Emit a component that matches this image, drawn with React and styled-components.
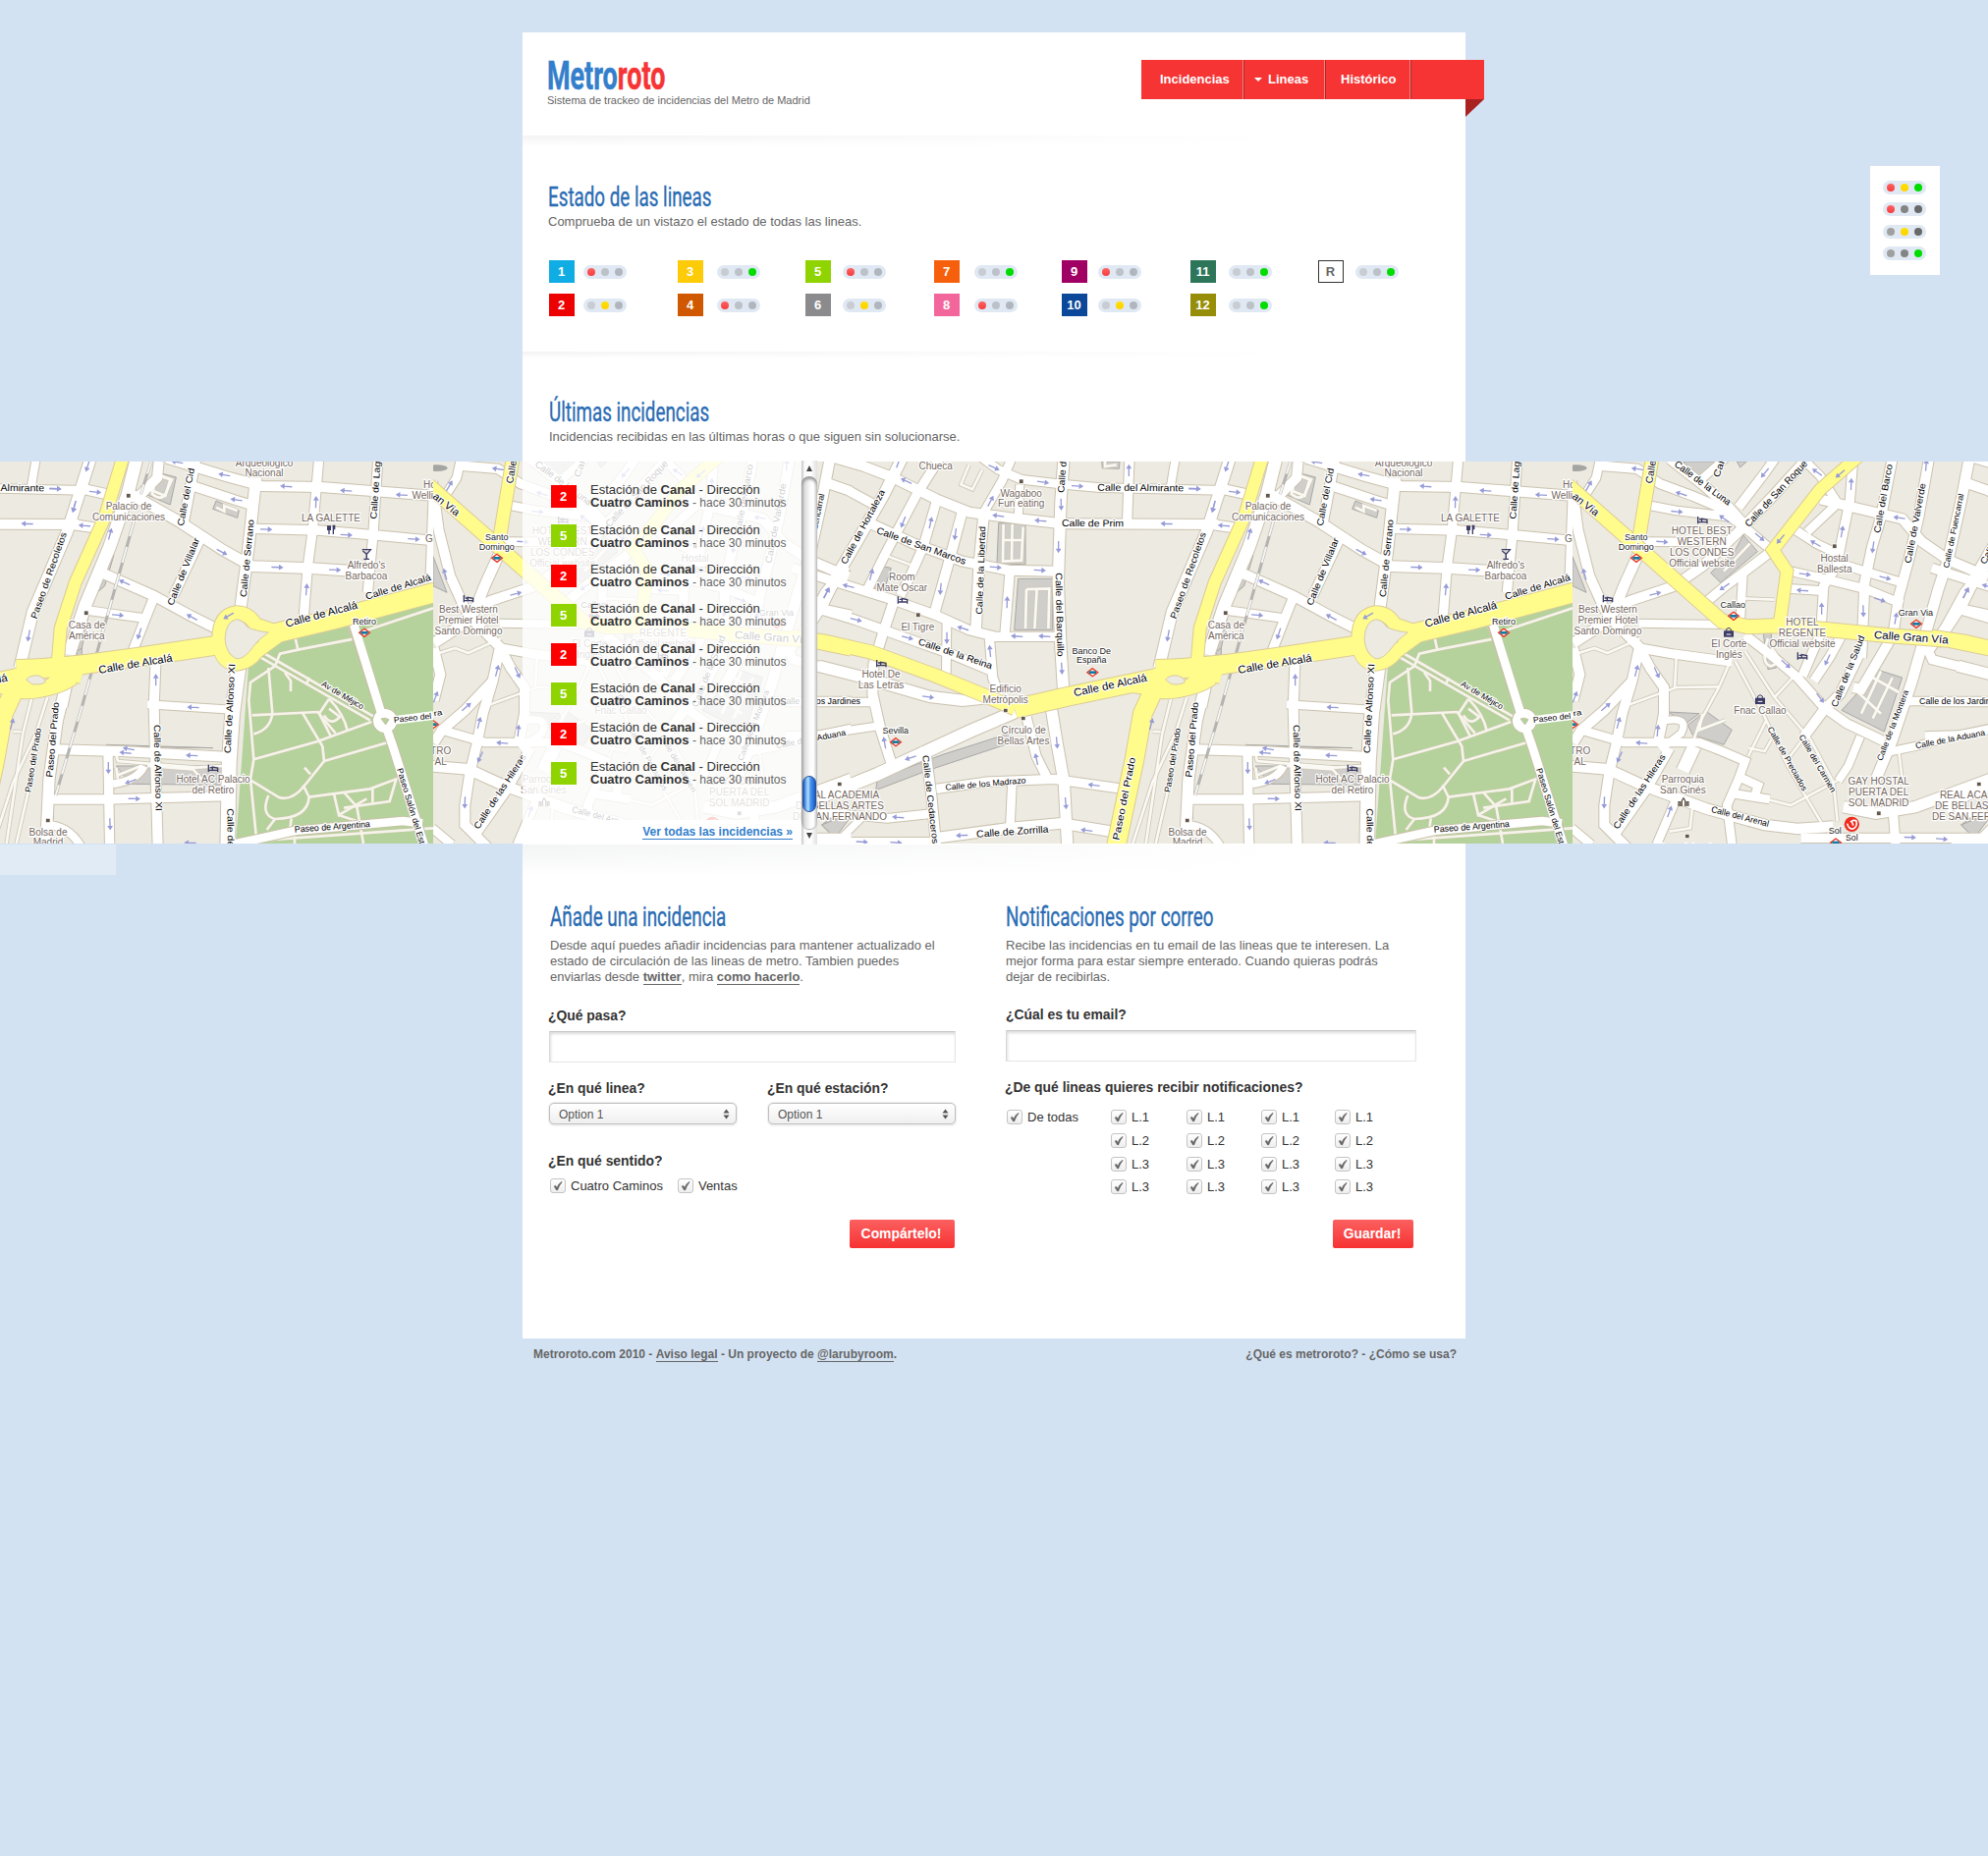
import React from 'react';
import styled, { createGlobalStyle, css } from 'styled-components';

const sans = '"Liberation Sans", Arial, Helvetica, sans-serif';
const display = 'Roboto, "Open Sans", sans-serif';

const GlobalStyle = createGlobalStyle`
  * { box-sizing: border-box; }
  body { margin: 0; background: #d3e2f3; font-family: ${sans}; font-size: 13px; color: #666; }
  h1, h2, p, ul { margin: 0; padding: 0; font-weight: normal; }
  ul { list-style: none; }
`;

/* ---------- street map ---------- */

// Each sheet of the map is drawn in its own coordinates and shifted into the tile.
const sheets = {
  a: {
    dx: -33,
    roads: [
      [30, 'M30 90 L50 240 L85 380 L130 480 L160 520 L235 595 L270 660 L312 720 L312 800 L295 885'],
      [32, 'M240 300 L190 410 L150 510 L35 585'],
      [30, 'M35 600 L55 680 L35 760'],
      [30, 'M130 495 L210 455 L340 412 L430 350 L550 235 L650 130 L750 20'],
      [28, 'M110 42 L230 52 L300 98 L400 135 L470 165 L560 232 L640 300'],
      [30, 'M330 22 L430 100 L510 170 L560 225'],
      [26, 'M70 135 L105 80 L118 20'],
      [26, 'M260 163 L350 180 L440 190 L520 200'],
      [26, 'M250 275 L420 276'],
      [28, 'M540 170 L620 65 L655 15'],
      [24, 'M420 90 L500 20'],
      [26, 'M725 10 L790 75 L838 150'],
      [30, 'M790 145 L870 165 L1040 205 L1100 275 L1180 330 L1302 382'],
      [28, 'M890 20 L880 150 L855 270 L840 350 L800 410 L792 545'],
      [26, 'M840 160 L750 245'],
      [26, 'M715 240 L780 282 L840 310 L860 345'],
      [30, 'M1010 20 L975 200 L948 290 L925 400 L918 575 L915 630'],
      [30, 'M1122 20 L1090 200 L1060 330 L1030 440 L1012 560 L915 725 L890 720'],
      [32, 'M1245 20 L1220 150 L1180 330 L1150 420 L1110 560 L1070 700 L1010 880 L960 1000'],
      [26, 'M700 365 L800 388 L930 420 L1040 465'],
      [26, 'M860 345 L990 385 L1040 400'],
      [26, 'M690 418 L800 425'],
      [28, 'M1295 350 L1230 430 L1170 540 L1120 610 L1132 635 L1302 678'],
      [26, 'M1240 95 L1310 120'],
      [26, 'M1215 478 L1310 498'],
      [24, 'M235 524 L490 528'],
      [28, 'M440 460 L500 410 L560 365 L630 312'],
      [26, 'M553 375 L545 520'],
      [28, 'M240 600 L340 618 L520 642'],
      [28, 'M560 560 L650 630 L720 690 L800 780 L870 830 L985 885'],
      [28, 'M735 685 L795 545'],
      [28, 'M770 700 L820 625 L855 560'],
      [30, 'M918 600 L850 740 L800 790 L740 870'],
      [26, 'M1050 762 L1310 762'],
      [24, 'M985 920 L1080 900 L1200 868 L1310 845'],
      [24, 'M912 870 L875 960 L845 1005'],
      [32, 'M20 960 L140 970 L250 1020 L440 1090 L620 1140 L720 1152 L830 1145'],
      [34, 'M860 1085 L960 1105 L1080 1085 L1310 1000'],
      [28, 'M730 1180 L1310 1180'],
      [28, 'M1012 1100 L1020 1200'],
      [28, 'M330 905 L260 1030 L155 1180'],
      [30, 'M235 605 L215 700 L185 800 L165 900 L145 980 L130 1080 L130 1140 L200 1210'],
      [30, 'M215 700 L130 790 L60 850 L35 890'],
      [26, 'M60 850 L190 888 L300 888 L420 888 L490 915 L560 945 L540 1000 L505 1080 L520 1200'],
      [22, 'M320 820 Q390 810 365 860 L300 910'],
      [40, 'M405 900 L370 975'],
      [26, 'M350 1060 L290 1200'],
      [26, 'M545 995 L600 1020 L590 1050'],
      [26, 'M525 1045 L635 1062'],
      [26, 'M30 1150 L90 1200'],
    ],
    paths: [
      'M530 640 L620 810 L690 960 L800 1145', 'M560 610 L650 750 L760 880 L830 1010 L842 1130',
      'M515 640 L480 720 L420 830 L400 890', 'M200 775 L350 720 L480 718', 'M350 630 L345 722',
      'M35 620 L100 600 L140 615 L240 570', 'M555 448 L650 452', 'M625 820 L570 930', 'M715 680 L650 750',
      'M570 905 L620 915 L640 880', 'M620 1060 L700 1080 L850 1000', 'M1030 920 L1040 1000', 'M750 860 L690 940',
      'M400 1080 L392 1150 L330 1160', 'M60 850 L150 870',
    ],
    gray: ['M555 255 L598 305 L485 400 L455 370 L530 300Z', 'M960 665 L1040 690 L985 855 L855 790 L910 730Z',
      'M385 835 L440 792 L520 850 L495 895 L400 865Z M325 795 L420 800 L380 830Z', 'M33 320 L75 430 L33 410Z', 'M370 30 L470 30 L430 85Z',
      'M615 550 L640 548 L640 600 L655 660 L630 665Z', 'M1220 1140 L1302 1080 L1260 1180Z', 'M535 30 L565 30 L545 48Z'],
    inner: ['M495 365 L575 280', 'M905 735 L975 800', 'M950 690 L1030 735', 'M975 670 L915 800', 'M1010 690 L950 815', 'M630 570 Q605 650 640 655 Q680 640 640 600', 'M430 800 L420 850 L500 820'],
    yellow: [[42, 'M10 95 L220 280 L490 518 L570 535 L650 532 L800 542 L1000 562 L1180 575 L1310 602'], [38, 'M278 10 L235 270'], [36, 'M905 15 L790 115 L645 300 L688 365 L665 530']],
    arrows: [[232, 53, 188], [82, 105, 300], [366, 129, 198], [351, 183, 5], [306, 275, 4], [497, 205, 215], [604, 260, 40], [621, 64, 130], [781, 63, 215], [851, 67, 140], [884, 100, 272], [669, 266, 130], [856, 245, 280], [776, 281, 210], [951, 291, 98], [1032, 202, 188], [1113, 42, 275], [742, 374, 8], [987, 385, 15], [736, 424, 184], [971, 452, 18], [794, 480, 270], [921, 486, 88], [1020, 510, 280], [1234, 432, 300], [285, 434, 345], [498, 412, 145], [70, 375, 255], [228, 670, 285], [290, 674, 65], [684, 648, 42], [812, 635, 115], [789, 752, 52], [134, 780, 320], [173, 829, 285], [293, 853, 275], [245, 890, 185], [177, 932, 115], [130, 1071, 92], [329, 1100, 290], [1063, 1178, 2], [1160, 1183, 5], [40, 750, 290]],
    streets: [['an Vía', 30, 140, 103, 198, 32], ['Calle', 276, 98, 288, 28, 30], ['Calle de la Luna', 342, 42, 508, 165, 30], ['Call', 480, 80, 500, 25, 28], ['Calle de San Roque', 572, 232, 752, 38, 30], ['Calle del Barco', 972, 250, 1010, 40, 28], ['Calle de Valverde', 1066, 342, 1112, 98, 28], ['Calle de Fuencarral', 1182, 356, 1228, 130, 25], ['Calle Gran Vía', 953, 570, 1180, 586, 33], ['Calle de la Salud', 840, 782, 926, 566, 28], ['Calle de la Montera', 978, 946, 1060, 732, 25], ['Calle de los Jardines', 1092, 772, 1338, 772, 26], ['Calle de la Aduana', 1082, 907, 1294, 866, 26], ['Calle de Preciados', 628, 846, 736, 1038, 25], ['Calle del Carmen', 724, 870, 824, 1042, 25], ['Calle del Arenal', 455, 1100, 630, 1146, 27], ['Calle de las Hileras', 172, 1155, 318, 932, 28], ['ra', 36, 808, 62, 804, 24]],
    places: [[['Santo', 'Domingo'], 227, 270, 29, 106, 27, 1], [['HOTEL BEST', 'WESTERN', 'LOS CONDES', 'Official website'], 428, 253, 33, 0, 30], [['Best Western', 'Premier Hotel', 'Santo Domingo'], 141, 491, 33, 0, 30], [['Callao'], 523, 476, 30, 0, 27, 1], [['HOTEL', 'REGENTE', 'Official website'], 735, 532, 33, 0, 30], [['El Corte', 'Inglés'], 511, 596, 33, 0, 30], [['Hostal', 'Ballesta'], 833, 335, 33, 0, 30], [['Gran Via'], 1081, 501, 33, 0, 27, 1], [['Fnac Callao'], 606, 801, 33, 0, 30], [['TRO', 'AL'], 56, 924, 33, 0, 30], [['Parroquia', 'San Ginés'], 370, 1011, 33, 0, 30], [['GAY HOSTAL', 'PUERTA DEL', 'SOL MADRID'], 968, 1017, 33, 0, 30], [['REAL ACADEMIA', 'DE BELLAS ARTES', 'DE SAN FERNANDO'], 1275, 1058, 33, 0, 30], [['Sol'], 835, 1167, 30, 0, 27, 1], [['Sol'], 886, 1188, 30, 0, 26, 1], [['Plaza del Celu'], 380, 1217, 30, 0, 29]],
    metro: [[228, 325], [525, 502], [1083, 526], [33, 833], [837, 1194]],
    beds: [[430, 209], [141, 449], [735, 624]], dots: [[834, 289], [969, 1105], [1275, 1016], [384, 1175]], bags: [[510, 552], [606, 757]],
  },
  b: {
    dx: 1137,
    roads: [
      [28, 'M60 95 L130 118 L225 170'], [34, 'M300 10 L240 130 L160 270 L90 390 L50 470 L-30 590'],
      [30, 'M60 10 L180 45 L270 80 L400 145 L500 185 L650 205 L770 218'], [28, 'M410 20 L340 130 L290 225 L240 320 L190 420'],
      [28, 'M402 145 L360 290 L320 380 L290 440'], [30, 'M480 180 L440 330 L395 490'],
      [30, 'M190 215 L330 280 L480 335 L620 362 L770 365'], [28, 'M-40 355 L100 400 L260 450 L400 500 L500 545 L580 565 L770 565'],
      [28, 'M40 480 L150 513 L310 570 L450 620 L570 670'], [30, 'M272 450 L235 560 L208 650 L205 740 L230 850 L262 950'],
      [26, 'M432 510 L430 690'], [32, 'M545 190 L530 350 L520 560'], [28, 'M625 360 L608 570'], [28, 'M562 570 L572 690 L592 745'],
      [34, 'M790 10 L780 150 L772 400 L780 600 L788 730'], [34, 'M752 790 L770 900 L790 1010 L800 1200'],
      [26, 'M500 -10 L590 55 L660 85 L790 100 L900 110 L1280 118'], [30, 'M775 220 L1260 222'], [28, 'M990 10 L983 210'], [24, 'M1132 10 L1115 110'],
      [26, 'M630 20 L600 90 L545 185'], [24, 'M655 100 L650 205'],
      [34, 'M40 655 L180 690 L380 748 L480 760 L570 750'], [38, 'M640 795 L500 855 L360 920 L220 985 L60 1050 L0 1090'],
      [26, 'M-60 765 L205 765'], [24, 'M-60 868 L40 865 L220 838'], [30, 'M365 900 L385 1050 L400 1210'], [28, 'M675 810 L705 930 L740 1000'],
      [28, 'M400 1030 L560 1008 L760 1000 L970 1030'], [26, 'M632 1000 L625 1150'], [32, 'M400 1180 L620 1150 L780 1135 L945 1162'],
      [26, 'M30 1100 L250 1120 L390 1105'], [26, 'M20 1192 L400 1192'], [22, 'M90 1200 L180 1110'],
    ],
    paths: ['M540 55 L510 115 L475 100 L500 40', 'M240 315 L320 345', 'M1165 750 L1130 860 L1060 1010 L1000 1197', 'M1140 860 L1115 1000 L1070 1197', 'M1060 855 L1085 855', 'M55 1040 L190 990'],
    gray: ['M590 218 L672 218 L672 345 L585 340Z', 'M650 388 L755 388 L755 545 L638 545Z', 'M220 1000 L420 925 L640 855 L610 895 L370 975 L215 1034Z', 'M232 350 L262 355 L240 425 L208 418Z', 'M50 1140 L150 1100 L90 1180Z', 'M905 30 L960 30 L958 52 L907 50Z', 'M1245 600 L1270 590 L1270 640Z'],
    inner: ['M605 222 L603 335 L660 332 L665 230 M605 270 L662 270 M632 222 L630 330', 'M675 420 L745 418 L742 540 M675 420 L672 540 M707 420 L700 540', 'M915 30 L915 45 L950 40'],
    yellow: [[40, 'M-40 565 L60 580 L200 612 L400 685 L560 750 L640 785'], [56, 'M640 785 L800 748 L1070 692 L1140 662 L1280 650'], [46, 'M1000 712 L1110 728 Q1190 725 1240 690'], [56, 'M1072 710 L1030 800 L1005 940 L948 1210']],
    arrows: [[309, 90, 205], [575, 48, 25], [725, 93, 8], [830, 105, 3], [1188, 113, 2], [988, 58, 270], [565, 152, 298], [590, 196, 188], [719, 211, 184], [1104, 220, 182], [299, 214, 112], [382, 218, 282], [458, 251, 98], [781, 160, 88], [773, 290, 90], [1247, 167, 105], [64, 432, 295], [201, 376, 285], [132, 411, 195], [413, 418, 95], [580, 353, 5], [715, 362, 3], [616, 461, 272], [154, 513, 15], [482, 540, 198], [311, 568, 15], [432, 568, 90], [647, 564, 184], [731, 564, 184], [564, 610, 265], [1108, 561, 100], [783, 661, 87], [374, 749, 8], [1056, 833, 285], [242, 890, 260], [768, 888, 85], [322, 935, 162], [706, 940, 258], [882, 1019, 188], [795, 1073, 85], [284, 1117, 184], [479, 1172, 178], [860, 1157, 188], [172, 1192, 3], [276, 1194, 4], [284, 33, 290]],
    streets: [['Calle de Hortaleza', 124, 346, 244, 122, 28], ['Calle de San Marcos', 215, 248, 486, 345, 29], ['Calle de la Libertad', 540, 497, 550, 228, 28], ['Calle d', 790, 126, 797, 30, 28], ['Calle del Almirante', 892, 119, 1155, 121, 30], ['Calle de Prim', 783, 228, 972, 229, 30], ['Calle del Barquillo', 764, 370, 770, 626, 28], ['Calle de la Reina', 343, 588, 567, 664, 29], ['Calle de Alcalá', 822, 748, 1045, 700, 33], ['Paseo de Recoletos', 1132, 512, 1224, 250, 28], ['Paseo del Prado', 958, 1188, 1008, 936, 29], ['Paseo del Prado', 1114, 1042, 1146, 846, 26], ['Calle de Cedaceros', 358, 928, 388, 1198, 27], ['Calle de los Madrazo', 428, 1034, 674, 1012, 26], ['Calle de Zorrilla', 523, 1178, 743, 1163, 30]],
    places: [[['Chueca'], 398, 55, 33, 0, 30], [['Wagaboo', 'Fun eating'], 659, 137, 32, 0, 30], [['Room', 'Mate Oscar'], 295, 392, 33, 0, 30], [['El Tigre'], 343, 545, 33, 0, 30], [['Banco De', 'España'], 874, 617, 28, 0, 27, 1], [['Hotel De', 'Las Letras'], 231, 690, 33, 0, 30], [['Edificio', 'Metrópolis'], 611, 735, 33, 0, 30], [['Círculo de', 'Bellas Artes'], 666, 861, 33, 0, 30], [['Sevilla'], 275, 861, 33, 0, 27, 1]],
    metro: [[877, 674], [276, 887]], beds: [[297, 453], [232, 647]], dots: [[660, 91], [345, 499], [612, 791], [666, 815]], bags: [],
  },
  c: {
    dx: 2277,
    roads: [
      [30, 'M130 113 L230 135'], [30, 'M100 222 L190 235'], [34, 'M160 10 L85 245 L-20 490 L-60 660'], [38, 'M300 10 L270 130 L215 290 L140 470 L90 620'],
      [32, 'M280 130 L430 215 L560 300 L650 350 L830 356 L1010 368'], [30, 'M365 30 L360 80 L300 140'], [30, 'M478 20 L440 220'], [28, 'M490 270 L410 440'],
      [30, 'M180 365 L350 440 L460 500 L560 550'], [26, 'M150 485 L330 510'], [28, 'M352 440 L320 520 L285 610'], [34, 'M662 80 L638 300 L612 500'],
      [30, 'M390 20 L570 75 L680 105 L860 108 L1210 135'], [28, 'M470 105 L600 148 L655 165'], [28, 'M655 235 L850 240 L1030 255 L1210 272'],
      [28, 'M855 10 L835 240 L820 350 L808 500'], [28, 'M1035 10 L1020 250 L1003 430'], [24, 'M1203 100 L1192 400'],
      [30, 'M355 650 L350 780 L362 1210'], [24, 'M330 772 L590 788'], [44, 'M610 650 L590 800 L580 950 L575 1210'], [30, 'M50 910 L250 915 L570 932'],
      [28, 'M210 920 L215 1210'], [28, 'M20 1062 L200 1062 L580 1052'], [34, 'M80 720 L55 820 L30 1000 L20 1210'], [30, 'M85 710 L70 780'], [24, 'M225 1015 Q300 1005 320 960'], [24, 'M20 1140 Q90 1140 130 1210'],
    ],
    paths: ['M235 925 L240 945 L480 965 L560 960', 'M235 990 L310 960 M235 965 L240 1000', 'M330 960 L470 970 L500 1005', 'M-20 740 L-50 860 L-100 1197', 'M345 95 L345 130 Q370 150 385 130 L405 85 L360 70 L370 30'],
    gray: ['M350 60 L418 78 L400 162 L325 130Z', 'M530 175 L540 150 L610 180 L605 202Z', 'M205 305 L228 315 L200 410 L165 440Z', 'M110 575 L150 500 L130 600 L115 610Z', 'M235 960 L560 960 L560 1018 L280 1015Z', 'M205 895 L530 905 L205 900Z', 'M1203 320 L1240 430 L1203 400Z', 'M40 1080 L44 1120 L38 1120Z'],
    inner: ['M540 170 L565 182 L565 165 L605 180', 'M355 70 L348 120 L385 135 L400 85Z'],
    yellow: [[36, 'M258 10 L200 200 L110 400 L65 540 L55 660'], [56, 'M-70 664 L60 660 L300 628 L550 590'], [58, 'M670 572 L730 552 L900 512 L1215 428'], [40, 'M740 555 L660 528 Q640 492 600 492 Q550 500 549 570 Q549 642 600 648 Q640 645 665 610 L740 555'], [46, 'M-100 725 Q-20 740 40 715 Q75 670 130 685']],
    arrows: [[48, 113, 2], [170, 123, 6], [148, 43, 108], [107, 167, 105], [139, 226, 184], [216, 252, 285], [422, 32, 190], [566, 71, 190], [603, 147, 188], [755, 106, 184], [938, 119, 184], [1108, 132, 183], [845, 155, 272], [692, 237, 2], [937, 254, 3], [1143, 267, 3], [557, 306, 28], [726, 353, 2], [902, 361, 2], [816, 422, 275], [261, 400, 205], [239, 499, 5], [467, 506, 208], [579, 501, 150], [306, 555, 108], [356, 698, 270], [471, 781, 183], [274, 908, 190], [264, 920, 186], [467, 928, 183], [211, 965, 90], [280, 1007, 160], [289, 1060, 1], [216, 1137, 88], [462, 1195, 182]],
    streets: [['Calle del Cid', 440, 228, 474, 52, 28], ['Calle de Lag', 1030, 206, 1042, 30, 28], ['Calle de Serrano', 632, 445, 656, 208, 28], ['Calle de Villalar', 408, 472, 490, 268, 28], ['Calle de Alcalá', 183, 678, 408, 640, 33], ['Calle de Alcalá', 755, 536, 974, 478, 33], ['Calle de Alcalá', 1000, 452, 1198, 392, 29], ['Calle de Alfonso XI', 584, 922, 598, 648, 28], ['Paseo del Prado', 40, 995, 60, 766, 28], ['Calle de Alfonso XI', 350, 834, 356, 1098, 28], ['Calle de Alfonso XI', 574, 1090, 578, 1360, 28], ['Av de Méjico', 860, 714, 985, 788, 25], ['Paseo del', 1084, 828, 1198, 815, 25], ['Paseo de Argentina', 780, 1163, 1011, 1146, 27], ['Paseo Salón del Est', 1092, 970, 1162, 1200, 26]],
    places: [[['Arqueológico', 'Nacional'], 687, 45, 31, 0, 30], [['Palacio de', 'Comunicaciones'], 273, 178, 33, 0, 30], [['LA GALETTE'], 891, 212, 33, 0, 30], [["Alfredo's", 'Barbacoa'], 999, 356, 33, 0, 30], [['Retiro'], 993, 527, 33, 0, 27, 1], [['Casa de', 'América'], 145, 539, 33, 0, 30], [['Hotel AC Palacio', 'del Retiro'], 531, 1011, 33, 0, 30], [['Bolsa de', 'Madrid'], 27, 1173, 31, 0, 30], [['Hotel', 'Wellington'], 1208, 110, 33, 0, 30], [['Gal'], 1202, 275, 33, 0, 30]],
    metro: [[993, 553]], beds: [[531, 967]], dots: [[273, 135], [144, 493], [27, 1127]], bags: [],
  },
};

const parkPaths = ['M780 560 L790 605 L735 617 L720 655 L645 705 L640 760 L655 940 L645 1000 L662 1170', 'M790 605 L960 572 L940 515', 'M1203 478 L1000 545', 'M700 660 L712 800', 'M650 805 L850 795 L905 860', 'M655 862 Q705 850 712 800', 'M655 940 L850 885 L1015 825', 'M805 800 L865 900 L870 945 L810 1020 Q770 1070 730 1055 L640 1000', 'M870 945 L1065 888', 'M885 755 L855 800 L890 868', 'M885 755 Q930 800 942 855', 'M870 805 Q890 840 918 810 L885 785', 'M700 1050 Q675 1110 720 1122 Q820 1120 824 1055 L806 1018', 'M824 1055 L1010 1030 L1090 1000 L1070 1068 L930 1088', 'M900 1045 L915 1110 L1000 1060', 'M930 1040 L970 1085 L990 1197', 'M1018 1030 L1018 1072', 'M915 1110 L975 1130', 'M720 1122 L695 1155', 'M770 1120 L765 1160', 'M640 1190 L1203 1150', 'M780 1160 L780 1197', 'M680 612 L1020 808', 'M665 622 L1010 820', 'M750 675 L768 700 L768 732', 'M825 690 L815 712', 'M810 965 L828 985'];

const S = Object.values(sheets);

function Layer({ draw }) {
  return S.map((s) => <g key={s.dx} transform={`translate(${s.dx} -30)`}>{draw(s)}</g>);
}

function StreetName({ d: [text, x1, y1, x2, y2, size] }) {
  const len = Math.hypot(x2 - x1, y2 - y1);
  const angle = (Math.atan2(y2 - y1, x2 - x1) * 180) / Math.PI;
  return (
    <text transform={`translate(${x1} ${y1}) rotate(${angle})`} fontSize={size} textLength={len} lengthAdjust="spacingAndGlyphs" fill="#000">
      {text}
    </text>
  );
}

function MapTile({ x }) {
  return (
    <TileSvg x={x} y={0} width={1160} height={389} viewBox="0 0 3480 1167" preserveAspectRatio="none" overflow="hidden">
      <rect width="3480" height="1167" fill="#eceae1" />
      <g transform="translate(2277 -30)">
        <path d="M640 640 L720 575 L950 515 L1203 450 V1200 H600Z" fill="#b5d29c" />
      </g>
      <Layer draw={(s) => s.gray.map((d) => <path key={d} d={d} fill="#cfcecb" stroke="#a9a8a5" strokeWidth="3" />)} />
      <Layer draw={(s) => [...s.inner, ...s.paths].map((d) => <path key={d} d={d} fill="none" stroke="#cfc8b8" strokeWidth="13" />)} />
      <Layer draw={(s) => s.roads.map(([w, d]) => <path key={d} d={d} fill="none" stroke="#cbc2af" strokeWidth={w + 6} />)} />
      <Layer draw={(s) => [...s.inner, ...s.paths].map((d) => <path key={d} d={d} fill="none" stroke="#faf9f4" strokeWidth="8" />)} />
      <Layer draw={(s) => s.roads.map(([w, d]) => <path key={d} d={d} fill="none" stroke="#fff" strokeWidth={w} />)} />
      <g transform="translate(2277 -30)" fill="none">
        {parkPaths.map((d) => <path key={d} d={d} stroke="#c3c7a4" strokeWidth="12" />)}
        {parkPaths.map((d) => <path key={d} d={d} stroke="#f6f4ea" strokeWidth="8" />)}
        <g stroke="#c8c2a6" strokeWidth="32">
          <path d="M955 520 L1045 800 L1080 900 L1178 1210" />
          <path d="M590 1200 L780 1158 L1110 1128 L1170 1135" />
        </g>
        <circle cx="1056" cy="822" r="39" fill="#c8c2a6" />
        <g stroke="#fff" strokeWidth="26">
          <path d="M955 510 L1045 800 L1080 900 L1178 1210" />
          <path d="M590 1200 L780 1158 L1110 1128 L1170 1135" />
          <path d="M1070 822 L1203 806" />
        </g>
        <circle cx="1056" cy="822" r="36" fill="#fff" />
        <path d="M1044 816 Q1056 810 1068 818 L1058 834Z" fill="#b5d29c" stroke="#c8c2a6" strokeWidth="3" />
        <path d="M345 20 L310 130 M290 210 L180 600 L130 780 L50 1050" stroke="#b4b3b0" strokeWidth="9" />
        <path d="M345 20 L310 130 M290 210 L180 600 L130 780 L50 1050" stroke="#f6f5f1" strokeWidth="6" strokeDasharray="50 34" />
      </g>
      <Layer draw={(s) => s.yellow.map(([w, d]) => <path key={d} d={d} fill="none" stroke="#dccb96" strokeWidth={w + 6} />)} />
      <Layer draw={(s) => s.yellow.map(([w, d]) => <path key={d} d={d} fill="none" stroke="#fffc8c" strokeWidth={w} />)} />
      <g transform="translate(2277 -30)"><path d="M567 572 Q570 518 602 512 Q622 514 635 535 Q660 548 700 552 Q665 575 642 610 Q620 636 600 632 Q570 615 567 572Z" fill="#eceae1" stroke="#d8cc9f" strokeWidth="3" /></g>
      <g transform="translate(1137 -30)"><path d="M1100 697 Q1110 681 1138 684 Q1155 688 1160 703 Q1145 714 1118 710Z" fill="#eceae1" stroke="#d8cc9f" strokeWidth="3" /></g>
      <ellipse cx="10" cy="20" rx="34" ry="10" fill="#777" opacity=".6" />
      <Layer draw={(s) => s.arrows.map(([ax, ay, r]) => (
        <path key={`${ax}-${ay}`} transform={`translate(${ax} ${ay}) rotate(${r})`} d="M-17 0 H10 M8 -5 L16 0 L8 5Z" stroke="#979bd6" strokeWidth="4" fill="#979bd6" />
      ))} />
      <g stroke="#fff" strokeWidth="7" strokeLinejoin="round" paintOrder="stroke">
        <Layer draw={(s) => s.streets.map((d) => <StreetName key={d.join()} d={d} />)} />
        <Layer draw={(s) => s.places.map(([lines, cx, py, lh, , size, dark]) => lines.map((t, i) => (
          <text key={`${t}${cx}`} x={cx} y={py + i * lh} fontSize={size} textAnchor="middle" fill={dark ? '#222' : '#75675e'}>{t}</text>
        )))} />
      </g>
      <Layer draw={(s) => (
        <>
          {s.metro.map(([mx, my]) => (
            <g key={mx} transform={`translate(${mx} ${my})`}>
              <path d="M0 -12 L16 0 L0 12 L-16 0Z" fill="#fff" stroke="#ea3323" strokeWidth="4" />
              <rect x="-11" y="-4" width="22" height="8" fill="#16789c" />
            </g>
          ))}
          {s.beds.map(([bx, by]) => <path key={bx} transform={`translate(${bx} ${by})`} d="M-14 -11 V11 M-14 6 H14 M14 11 V-1 L-2 -4 V4 M-10 -2 H-4" stroke="#3b3b66" strokeWidth="4" fill="none" />)}
          {s.dots.map(([px, py]) => <rect key={px} x={px - 7} y={py - 7} width="13" height="13" fill="#62564a" stroke="#fff" strokeWidth="2" />)}
          {s.bags.map(([px, py]) => (
            <g key={px} transform={`translate(${px} ${py})`}>
              <path d="M-15 -5 H15 V14 H-15Z" fill="#3b3b66" />
              <path d="M-7 -3 V-10 Q0 -18 7 -10 V-3" stroke="#3b3b66" strokeWidth="3" fill="none" />
              <path d="M-7 6 H7" stroke="#fff" strokeWidth="3" />
            </g>
          ))}
        </>
      )} />
      <g transform="translate(2277 -30)" fill="none" stroke="#3b3b66" strokeWidth="4">
        <path d="M885 226 V252 M881 226 V238 H889 V226 M898 226 V252 M896 226 H902 V238" />
        <path d="M986 299 H1012 L1000 313 V326 M991 328 H1008 M988 303 L999 312" />
      </g>
      <g transform="translate(-33 -30)">
        <path d="M357 1083 V1070 H362 V1083 M367 1083 V1066 L372 1058 L377 1066 V1083 M382 1083 V1070 H387 V1083" stroke="#62564a" strokeWidth="4" fill="none" />
        <circle cx="886" cy="1138" r="23" fill="#ee2a1d" />
        <path d="M872 1136 Q876 1154 890 1152 Q904 1146 900 1128 Q892 1124 884 1130 Q890 1134 890 1142" fill="none" stroke="#fff" strokeWidth="5" />
      </g>
    </TileSvg>
  );
}

const TileSvg = styled.svg`
  font-family: ${sans};
`;

/* ---------- page ---------- */

const Screen = styled.div`
  position: relative;
  width: 2024px;
  height: 1890px;
  padding-top: 33px;
  overflow: hidden;
`;

const Sheet = styled.div`
  width: 960px;
  height: ${(p) => p.$h}px;
  margin: 0 auto;
  background: #fff;
`;

const fade = css`
  background-image: linear-gradient(to right, rgba(255, 255, 255, 0), #fff 82%), linear-gradient(to bottom, ${(p) => p.$tone || '#f3f3f3'}, #fff);
  background-size: 100% ${(p) => p.$fade}px;
  background-repeat: no-repeat;
`;

const Header = styled.header`
  display: flex;
  justify-content: space-between;
  height: 105px;
  padding: 28px 0 0 25px;
`;

const Brand = styled.div`
  width: 300px;
`;

const Logo = styled.h1`
  font: 700 41px/40px ${display};
  height: 34px;
  margin-left: 0;
  margin-top: -4px;
  white-space: nowrap;
  color: #347fcb;
  -webkit-text-stroke: 0.5px;
  transform: scaleX(0.656);
  transform-origin: 0 0;
  span { color: #f63434; }
`;

const Tagline = styled.p`
  margin-top: 5px;
  font-size: 11px;
  line-height: 13px;
`;

const Nav = styled.nav`
  position: relative;
  display: flex;
  width: 349px;
  height: 40px;
  margin-right: -19px;
  background: #f63434;
  &::after {
    content: '';
    position: absolute;
    right: 0;
    top: 40px;
    width: 19px;
    height: 18px;
    background: #a92121;
    clip-path: polygon(0 0, 100% 0, 0 100%);
  }
`;

const NavItem = styled.a`
  display: flex;
  align-items: center;
  width: ${(p) => p.$w}px;
  padding-left: ${(p) => p.$pad}px;
  padding-bottom: 2px;
  border-right: 1px solid #a82a2a;
  box-shadow: inset -1px 0 #f98080;
  font-size: 13px;
  font-weight: bold;
  color: #fff;
`;

const Caret = styled.i`
  margin: 1px 6px 0 0;
  border: 4px solid transparent;
  border-top-color: #fff;
  border-bottom: 0;
`;

const Section = styled.section`
  height: ${(p) => p.$h}px;
  padding: ${(p) => p.$pad}px 0 0 26px;
  ${fade}
`;

const Title = styled.h2`
  width: max-content;
  margin-left: ${(p) => p.$ml || 0}px;
  font: 400 28px/32px ${display};
  color: #2a6cb3;
  -webkit-text-stroke: 0.35px #2a6cb3;
  transform: scaleX(${(p) => p.$sx});
  transform-origin: 0 0;
  white-space: nowrap;
`;

const Lead = styled.p`
  line-height: 16px;
  width: ${(p) => p.$w || 600}px;
  margin-top: ${(p) => p.$mt || 0}px;
  padding-left: ${(p) => p.$pl || 0}px;
  a { font-weight: bold; border-bottom: 1px solid #666; display: inline-block; line-height: 14px; }
`;

const Lines = styled.div`
  display: grid;
  grid-template-columns: 131px 130px 131px 130px 131px 130px 110px;
  grid-template-rows: 23px 23px;
  grid-auto-flow: column;
  row-gap: 11px;
  margin: 31px 0 0 1px;
`;

const Line = styled.div`
  display: flex;
  align-items: center;
  gap: ${(p) => p.$gap}px;
`;

const Badge = styled.span`
  display: flex;
  align-items: center;
  justify-content: center;
  flex: none;
  width: 26px;
  height: 23px;
  padding-right: 1px;
  background: ${(p) => p.$c};
  border: ${(p) => (p.$outline ? '1px solid #333' : '0')};
  color: ${(p) => (p.$outline ? '#666' : '#fff')};
  font-size: 13px;
  font-weight: bold;
`;

const LightBox = styled.span`
  display: flex;
  align-items: center;
  justify-content: space-between;
  flex: none;
  width: 44px;
  height: 14px;
  padding: 0 4px;
  border-radius: 7px;
  background: #e0e9f3;
`;

const Dot = styled.i`
  width: 8px;
  height: 8px;
  border-radius: 50%;
  background: ${(p) => p.$c};
`;

const LIT = ['linear-gradient(#ff6464,#f63c3c)', 'linear-gradient(#ffe000,#ffd200)', '#00dc00'];
const OFF = ['#c9cdd3', '#bdc2c9', '#b1b6be'];
const DARK = ['#a0a0a0', '#848484', '#696969'];

function Lights({ on, off = OFF }) {
  return <LightBox>{off.map((c, i) => <Dot key={c} $c={on.includes(i) ? LIT[i] : c} />)}</LightBox>;
}

const LINES = [
  ['1', '#10ade4', 0, 9], ['2', '#ec0000', 1, 9], ['3', '#fdcb08', 2, 14], ['4', '#d05800', 0, 14],
  ['5', '#8fd400', 0, 12], ['6', '#8b8b8d', 1, 12], ['7', '#f6600c', 2, 15], ['8', '#f3669c', 0, 15],
  ['9', '#a00064', 0, 11], ['10', '#0c4899', 1, 11], ['11', '#2e765a', 2, 13], ['12', '#968d08', 2, 13],
  ['R', '#fff', 2, 12],
];

const Band = styled.div`
  position: relative;
  height: 390px;
  display: flex;
  padding-left: 532px;
  background: linear-gradient(#fff, #fff) 532px 389px / 960px 1px no-repeat;
`;

const MapSvg = styled.svg`
  position: absolute;
  left: 0;
  top: 0;
`;

const Panel = styled.div`
  position: relative;
  display: flex;
  flex-direction: column;
  justify-content: space-between;
  width: 284px;
  height: 390px;
  padding-top: 17px;
  background: rgba(255, 255, 255, 0.8);
`;

const Incident = styled.li`
  display: flex;
  height: 40.3px;
  padding: 7px 0 0 29px;
  gap: 14px;
`;

const IncidentText = styled.p`
  font-size: 13px;
  line-height: 13px;
  margin-top: -1.6px;
  white-space: nowrap;
  color: #333;
  small { font-size: 12px; color: #666; }
`;

const PanelFoot = styled.div`
  height: 25px;
  padding: 4px 9px 0 0;
  background: #fff;
  text-align: right;
  a { display: inline-block; line-height: 14px; font-size: 12px; font-weight: bold; color: #347fcb; border-bottom: 1px solid #347fcb; }
`;

const Scroll = styled.div`
  position: relative;
  display: flex;
  flex-direction: column;
  align-items: center;
  justify-content: space-between;
  width: 16px;
  height: 391px;
  margin-top: -1px;
  padding: 5px 0 6px;
  background: linear-gradient(to right, #c4c4c4, #fafafa 20%, #fff 60%, #e0e0e0);
`;

const ScrollArrow = styled.i`
  border: 3.5px solid transparent;
  ${(p) => (p.$up ? 'border-bottom: 6px solid #444; border-top: 0;' : 'border-top: 6px solid #444; border-bottom: 0;')}
`;

const Track = styled.div`
  display: flex;
  flex-direction: column;
  justify-content: flex-end;
  width: 16px;
  height: 359px;
  padding: 0 1px 17px;
  border-radius: 8px;
  background: linear-gradient(to right, #ababab, #dedede 22%, #fbfbfb 55%, #fff 75%, #d2d2d2);
  box-shadow: inset 0 3px 3px #999, 0 1px 1px #aaa;
`;

const Thumb = styled.div`
  height: 37px;
  border: 1px solid #29509c;
  border-radius: 7px;
  background: linear-gradient(to right, #1c56bd, #7cbaf6 25%, #b4dcff 42%, #4a96ea 58%, #2f7be0 80%, #1d57b4);
`;

const Bottom = styled(Sheet)`
  display: flex;
  ${fade}
`;

const Column = styled.section`
  width: ${(p) => p.$w}px;
  padding: 58px 0 0 ${(p) => p.$pl}px;
`;

const Label = styled.div`
  margin: ${(p) => p.$m};
  font-size: 13.9px;
  font-weight: bold;
  line-height: 16px;
  white-space: nowrap;
  color: #333;
`;

const Input = styled.input`
  display: block;
  width: ${(p) => p.$w}px;
  height: 32px;
  margin-left: ${(p) => p.$ml || 0}px;
  border: 1px solid #e6e6e6;
  border-top-color: #c6c6c6;
  border-left-color: #d8d8d8;
  background: #fff;
  box-shadow: inset 1px 2px 3px #ddd;
  outline: 0;
`;

const Row = styled.div`
  display: flex;
  gap: ${(p) => p.$gap || 0}px;
  margin-left: ${(p) => p.$ml || 0}px;
`;

const Select = styled.div`
  display: flex;
  align-items: center;
  justify-content: space-between;
  width: 191px;
  height: 22px;
  padding: 1px 6px 0 9px;
  border: 1px solid #bfbfbf;
  border-radius: 5px;
  background: linear-gradient(#fff, #efefef);
  box-shadow: 0 0 0 1px #efefef, 0 1px 2px #ccc;
  font-size: 12px;
  color: #555;
`;

const CheckLabel = styled.label`
  display: flex;
  align-items: center;
  gap: 5px;
  height: 15px;
  white-space: nowrap;
  color: #333;
`;

const Box = styled.span`
  display: flex;
  width: 16px;
  height: 15px;
  border: 1px solid #c4c4c4;
  border-radius: 3px;
  background: linear-gradient(#fff, #eee);
`;

function Check({ children }) {
  return (
    <CheckLabel>
      <Box>
        <svg width="14" height="13" viewBox="0 0 14 13"><path d="M3 7 L4.6 6.2 L6 8.2 Q7.6 4.2 10.8 2.2 L11.3 2.7 Q8.2 6 6.7 11 H5.5 Z" fill="#666" stroke="#666" strokeWidth="0.4" /></svg>
      </Box>
      {children}
    </CheckLabel>
  );
}

const Grid = styled.div`
  display: grid;
  grid-template-columns: 106px 77px 76px 75px 60px;
  grid-template-rows: 24px 24px 23px 15px;
  margin: 15px 0 0 1px;
`;

const Button = styled.button`
  display: block;
  width: ${(p) => p.$w}px;
  height: 29px;
  margin: ${(p) => p.$m};
  padding: 0 2px 1px 0;
  border: 0;
  border-radius: 2px;
  background: linear-gradient(#fc6060, #f63232);
  font: bold 13.9px ${sans};
  color: #fff;
`;

const Footer = styled.footer`
  display: flex;
  justify-content: space-between;
  width: 960px;
  margin: 0 auto;
  padding: 8px 9px 0 11px;
  font-size: 12px;
  font-weight: bold;
  line-height: 16px;
  a { display: inline-block; line-height: 14px; border-bottom: 1px solid #666; }
`;

const Legend = styled.aside`
  position: absolute;
  left: 1904px;
  top: 169px;
  display: flex;
  flex-direction: column;
  align-items: center;
  gap: 8.3px;
  width: 71px;
  height: 111px;
  padding: 15px 1px 0 0;
  background: #fff;
`;

const Ghost = styled.div`
  position: absolute;
  left: 0;
  top: 860px;
  width: 118px;
  height: 31px;
  background: #e0ebf6;
`;

export default function App() {
  return (
    <>
      <GlobalStyle />
      <Screen>
        <Sheet $h={437}>
          <Header>
            <Brand>
              <Logo>Metro<span>roto</span></Logo>
              <Tagline>Sistema de trackeo de incidencias del Metro de Madrid</Tagline>
            </Brand>
            <Nav>
              <NavItem $w={105} $pad={19}>Incidencias</NavItem>
              <NavItem $w={83} $pad={10}><Caret />Lineas</NavItem>
              <NavItem $w={87} $pad={15}>Histórico</NavItem>
            </Nav>
          </Header>
          <Section $h={220} $pad={47} $fade={11}>
            <Title $sx={0.671}>Estado de las lineas</Title>
            <Lead $mt={1}>Comprueba de un vistazo el estado de todas las lineas.</Lead>
            <Lines>
              {LINES.map(([n, c, on, gap]) => (
                <Line key={n} $gap={gap}>
                  <Badge $c={c} $outline={n === 'R'}>{n}</Badge>
                  <Lights on={[on]} />
                </Line>
              ))}
            </Lines>
          </Section>
          <Section $h={112} $pad={46} $fade={7}>
            <Title $sx={0.671} $ml={1}>Últimas incidencias</Title>
            <Lead $mt={1} $pl={1}>Incidencias recibidas en las últimas horas o que siguen sin solucionarse.</Lead>
          </Section>
        </Sheet>

        <Band>
          <MapSvg width="2024" height="389">
            <MapTile x={-719} />
            <MapTile x={441} />
            <MapTile x={1601} />
          </MapSvg>
          <Panel>
            <ul>
              {['2', '5', '2', '5', '2', '5', '2', '5'].map((n, i) => (
                <Incident key={i}>
                  <Badge $c={n === '2' ? '#fc0000' : '#8fd400'}>{n}</Badge>
                  <IncidentText>
                    Estación de <b>Canal</b> - Dirección<br />
                    <b>Cuatro Caminos</b> <small>- hace 30 minutos</small>
                  </IncidentText>
                </Incident>
              ))}
            </ul>
            <PanelFoot><a>Ver todas las incidencias »</a></PanelFoot>
          </Panel>
          <Scroll>
            <ScrollArrow $up />
            <Track><Thumb /></Track>
            <ScrollArrow />
          </Scroll>
        </Band>

        <Bottom $h={503} $fade={32} $tone="#f3f4f4">
          <Column $w={465} $pl={28}>
            <Title $sx={0.674}>Añade una incidencia</Title>
            <Lead $w={410} $mt={5}>
              Desde aquí puedes añadir incidencias para mantener actualizado el estado de circulación de las lineas de metro. Tambien puedes enviarlas desde <a>twitter</a>, mira <a>como hacerlo</a>.
            </Lead>
            <Label $m="23px 0 8px -2px">¿Qué pasa?</Label>
            <Input $w={414} $ml={-1} />
            <Row $gap={32} $ml={-1}>
              {['¿En qué linea?', '¿En qué estación?'].map((t) => (
                <div key={t}>
                  <Label $m="18px 0 7px -1px">{t}</Label>
                  <Select>
                    Option 1
                    <svg width="7" height="11"><path d="M0.5 4.5 L3.5 0.5 L6.5 4.5Z M0.5 6.5 L3.5 10.5 L6.5 6.5Z" fill="#555" /></svg>
                  </Select>
                </div>
              ))}
            </Row>
            <Label $m="29px 0 10px -2px">¿En qué sentido?</Label>
            <Row $gap={15}><Check>Cuatro Caminos</Check><Check>Ventas</Check></Row>
            <Button $w={107} $m="27px 0 0 305px">Compártelo!</Button>
          </Column>
          <Column $w={480} $pl={27}>
            <Title $sx={0.672}>Notificaciones por correo</Title>
            <Lead $w={405} $mt={5}>
              Recibe las incidencias en tu email de las lineas que te interesen. La mejor forma para estar siempre enterado. Cuando quieras podrás dejar de recibirlas.
            </Lead>
            <Label $m="22px 0 8px 0">¿Cúal es tu email?</Label>
            <Input $w={418} />
            <Label $m="18px 0 0 -1px">¿De qué lineas quieres recibir notificaciones?</Label>
            <Grid>
              {['1', '2', '3', '3'].map((n, r) => (
                <React.Fragment key={r}>
                  {r === 0 ? <Check>De todas</Check> : <span />}
                  {[0, 1, 2, 3].map((c) => <Check key={c}>L.{n}</Check>)}
                </React.Fragment>
              ))}
            </Grid>
            <Button $w={82} $m="26px 0 0 333px">Guardar!</Button>
          </Column>
        </Bottom>

        <Footer>
          <span>Metroroto.com 2010 - <a>Aviso legal</a> - Un proyecto de <a>@larubyroom</a>.</span>
          <span>¿Qué es metroroto? - ¿Cómo se usa?</span>
        </Footer>

        <Ghost />
        <Legend>
          <Lights on={[0, 1, 2]} />
          <Lights on={[0]} off={DARK} />
          <Lights on={[1]} off={DARK} />
          <Lights on={[2]} off={DARK} />
        </Legend>
      </Screen>
    </>
  );
}
